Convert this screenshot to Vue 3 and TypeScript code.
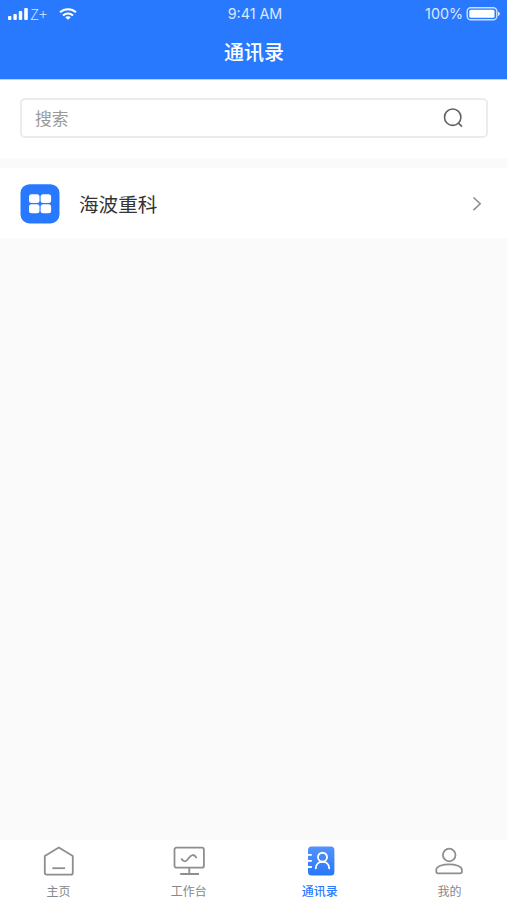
<script setup lang="ts">
import { ref } from 'vue'

type TabKey = 'home' | 'work' | 'contacts' | 'mine'

const tabs: { key: TabKey; label: string }[] = [
  { key: 'home', label: '主页' },
  { key: 'work', label: '工作台' },
  { key: 'contacts', label: '通讯录' },
  { key: 'mine', label: '我的' },
]
const active = ref<TabKey>('contacts')
const keyword = ref('')
</script>

<template>
  <div class="screen">
    <header class="header">
      <div class="status">
        <div class="status-left">
          <svg class="signal" width="20" height="12" viewBox="0 0 20 12" fill="#fff">
            <rect x="0" y="8" width="3.4" height="4" rx="1" />
            <rect x="5.4" y="6" width="3.4" height="6" rx="1" />
            <rect x="10.8" y="3" width="3.4" height="9" rx="1" />
            <rect x="16.2" y="0" width="3.6" height="12" rx="1" />
          </svg>
          <span class="carrier">Z+</span>
          <svg class="wifi" width="18" height="12" viewBox="0 0 18 12" fill="none" stroke="#fff" stroke-width="2">
            <path d="M1 4.3C5.4.1 12.6.1 17 4.3M4 7.4c2.8-2.6 7.2-2.6 10 0" />
            <path d="M6.2 9.2c1.6-1.4 4-1.4 5.6 0L9 11.8z" fill="#fff" stroke="none" />
          </svg>
        </div>
        <span class="time">9:41 AM</span>
        <div class="status-right">
          <span>100%</span>
          <svg class="battery" width="35" height="14" viewBox="0 0 35 14">
            <rect x="1.2" y=".8" width="29.6" height="12" rx="3.5" fill="none" stroke="#cfe0ff" stroke-width="1.4" />
            <rect x="3.3" y="2.8" width="25.2" height="8" rx="1.5" fill="#fff" />
            <path d="M32 4.7c2.4.7 2.4 3.5 0 4.2z" fill="#e2ecff" />
          </svg>
        </div>
      </div>
      <h1 class="title">通讯录</h1>
    </header>

    <section class="search-panel">
      <label class="search">
        <input v-model="keyword" type="text" placeholder="搜索" />
        <svg width="20" height="20" viewBox="0 0 20 20" fill="none" stroke="#606265" stroke-width="1.6">
          <circle cx="9.7" cy="9.2" r="8.2" />
          <path d="M15 14.6l4 4" />
        </svg>
      </label>
    </section>

    <main class="list">
      <div class="row">
        <svg class="org-icon" width="40" height="40" viewBox="0 0 40 40">
          <rect x=".5" y=".2" width="39" height="39.2" rx="9" fill="#2879ff" />
          <g fill="#fff">
            <rect x="9" y="10.2" width="10.5" height="8.9" rx="2.5" />
            <rect x="20.6" y="10.2" width="10.5" height="8.9" rx="2.5" />
            <rect x="9" y="20.2" width="10.5" height="9.1" rx="2.5" />
            <rect x="20.6" y="20.2" width="10.5" height="9.1" rx="2.5" />
          </g>
        </svg>
        <span class="org-name">海波重科</span>
        <svg class="chevron" width="10" height="16" viewBox="0 0 10 16" fill="none" stroke="#8b8b8b" stroke-width="1.5">
          <path d="M1.5 1.5l6.7 6.3-6.7 6.3" />
        </svg>
      </div>
    </main>

    <nav class="tabbar">
      <button
        v-for="tab in tabs"
        :key="tab.key"
        class="tab"
        :class="{ active: tab.key === active }"
        @click="active = tab.key"
      >
        <svg width="34" height="32" viewBox="0 0 34 32" fill="none" stroke="#8c8e91" stroke-width="1.8" stroke-linejoin="round">
          <template v-if="tab.key === 'home'">
            <path d="M2.8 11L16.8 2.4 30.8 11v16.7q0 2-2 2h-24q-2 0-2-2z" />
            <path d="M10.3 23.2h12.8" />
          </template>
          <template v-else-if="tab.key === 'work'">
            <rect x="2.5" y="2.6" width="29.4" height="20.1" rx="2" />
            <path d="M17.3 22.7v6.2M8.2 29h18.8M9.3 13.5c2.1 4 4.8 3.7 7.5-.5 2.4-3.7 5.2-4.2 7.8-.1" />
          </template>
          <template v-else-if="tab.key === 'contacts'">
            <defs>
              <linearGradient id="book" x1="0" y1="0" x2="0" y2="1">
                <stop offset="0" stop-color="#5592fb" />
                <stop offset="1" stop-color="#2877fa" />
              </linearGradient>
            </defs>
            <rect x="5" y="1.5" width="26.4" height="29" rx="3.5" fill="url(#book)" stroke="none" />
            <path d="M4 9.800h4.800M4 15.800h4.800M4 22h4.800" stroke="#fff" stroke-width="1.8" />
            <g stroke="#fff" stroke-width="1.9" stroke-linecap="round">
              <circle cx="19.5" cy="12.2" r="4.5" />
              <path d="M12.800 23.300c0-8.800 13.400-8.800 13.400 0" />
            </g>
          </template>
          <template v-else>
            <circle cx="17.2" cy="10" r="6.3" />
            <path d="M4.300 24.800c0-7.200 25.600-7.200 25.600 0V26.500q0 1.800-1.800 1.800H6.100q-1.800 0-1.800-1.800z" />
          </template>
        </svg>
        <span>{{ tab.label }}</span>
      </button>
    </nav>
  </div>
</template>

<style>
body {
  margin: 0;
  background: #fafafa;
}
</style>

<style scoped>
.screen {
  display: flex;
  flex-direction: column;
  height: 900px;
  background: #fafafa;
  font-family: Inter, "Noto Sans CJK SC", sans-serif;
  color: #333;
}
.header {
  box-sizing: border-box;
  height: 80px;
  border-bottom: 1px solid #b5d5ff;
  background: #2979ff;
  color: #fff;
}
.status {
  display: grid;
  grid-template-columns: 1fr auto 1fr;
  align-items: center;
  height: 28px;
  padding: 0 6px 0 7px;
  font-size: 14px;
  line-height: 28px;
  color: #dce8ff;
}
.status-left,
.status-right {
  display: flex;
  align-items: center;
}
.status-left {
  padding-left: 1px;
}
.carrier {
  width: 18px;
  margin-left: 2px;
  font-family: "Noto Sans CJK SC", sans-serif;
  font-size: 15px;
  font-weight: 300;
}
.wifi {
  margin-left: 11px;
}
.time {
  padding-left: 2px;
  font-size: 14.3px;
}
.status-right {
  justify-content: flex-end;
  gap: 3px;
  font-size: 14.3px;
}
.title {
  margin: 10px 0 0;
  padding-left: 1px;
  font-size: 20px;
  line-height: 30px;
  font-weight: 500;
  text-align: center;
}
.search-panel {
  box-sizing: border-box;
  height: 78px;
  padding: 18px 19px 0 20px;
  background: #fff;
}
.search {
  box-sizing: border-box;
  display: flex;
  align-items: center;
  height: 40px;
  padding: 0 23px 0 13px;
  border: 2px solid #ebebeb;
  border-radius: 5px;
}
.search input {
  flex: 1;
  min-width: 0;
  padding: 1px 0 0;
  border: 0;
  outline: 0;
  background: none;
  font: 16.8px/30px Inter, "Noto Sans CJK SC", sans-serif;
}
.search input::placeholder {
  color: #9a9a9a;
}
.list {
  flex: 1;
  padding-top: 10px;
}
.row {
  box-sizing: border-box;
  display: flex;
  align-items: center;
  height: 70px;
  padding: 1px 25px 0 20px;
  background: #fff;
}
.org-name {
  flex: 1;
  margin-left: 19px;
  padding-top: 2px;
  font-size: 19.6px;
  line-height: 30px;
}
.tabbar {
  box-sizing: border-box;
  display: flex;
  justify-content: space-between;
  height: 60px;
  padding: 5px 0 0 1px;
  background: #fff;
}
.tab {
  display: flex;
  flex-direction: column;
  align-items: center;
  width: 115px;
  padding: 0;
  border: 0;
  background: none;
  font-family: "Noto Sans CJK SC", sans-serif;
  font-size: 12px;
  line-height: 18px;
  color: #85878a;
}
.tab span {
  margin-top: 5px;
}
.tab.active {
  padding-left: 1px;
  color: #2979ff;
  font-weight: 500;
}
</style>
